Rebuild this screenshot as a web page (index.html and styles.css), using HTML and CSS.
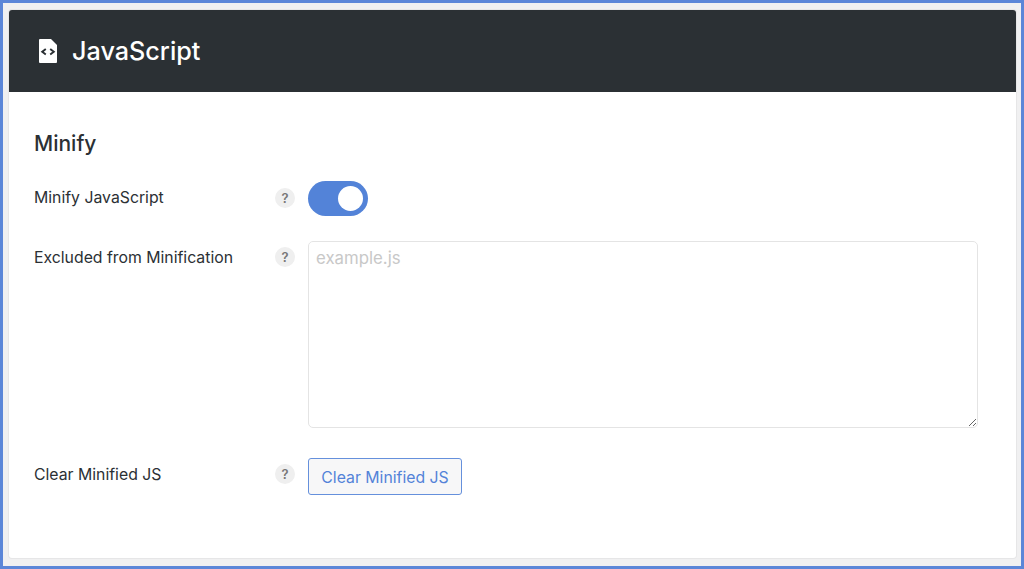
FILE: index.html
```html
<!DOCTYPE html>
<html lang="en">
<head>
    <meta charset="UTF-8">
    <meta name="viewport" content="width=device-width, initial-scale=1.0">
    <title>JavaScript</title>
    <link rel="stylesheet" href="styles.css">
</head>
<body>
    <div class="frame">
        <div class="card">
            <div class="card-header">
                <svg class="file-icon" width="18" height="24" viewBox="0 0 18 24">
                    <path d="M1 0H12L18 6V23a1 1 0 0 1-1 1H1a1 1 0 0 1-1-1V1a1 1 0 0 1 1-1Z" fill="#fff"/>
                    <path d="M6.8 10 3.2 12.8 6.8 15.6M11.2 10 14.8 12.8 11.2 15.6" fill="none" stroke="#2b3034" stroke-width="1.9"/>
                </svg>
                <h1>JavaScript</h1>
            </div>
            <div class="card-body">
                <h2>Minify</h2>
                <div class="row row-toggle">
                    <label>Minify JavaScript</label>
                    <span class="help">?</span>
                    <span class="toggle"><span class="knob"></span></span>
                </div>
                <div class="row row-area">
                    <label>Excluded from Minification</label>
                    <span class="help">?</span>
                    <textarea placeholder="example.js"></textarea>
                </div>
                <div class="row row-button">
                    <label>Clear Minified JS</label>
                    <span class="help">?</span>
                    <button>Clear Minified JS</button>
                </div>
            </div>
        </div>
    </div>
</body>
</html>
```

FILE: styles.css
```css
* {
    box-sizing: border-box;
}

html, body {
    height: 100%;
}

body {
    margin: 0;
    font-family: Inter, "Liberation Sans", sans-serif;
    color: #2b3034;
}

.frame {
    height: 569px;
    padding: 7px 5px 8px 6px;
    background: #f0f0f1;
    border: 3px solid #5b86d8;
}

.card {
    height: 100%;
    background: #fff;
    border-radius: 3px;
    box-shadow: 0 0 0 1px #e6e6e7;
    overflow: hidden;
}

.card-header {
    display: flex;
    align-items: center;
    height: 82px;
    padding: 0 0 0 30px;
    background: #2b3034;
    color: #fff;
}

.file-icon {
    margin-right: 15px;
}

h1 {
    margin: 0;
    font-size: 25.2px;
    font-weight: 500;
}

.card-body {
    padding: 39px 38px 0 25px;
}

h2 {
    margin: 0 0 24px;
    font-size: 21px;
    line-height: 26px;
    font-weight: 500;
}

.row {
    display: flex;
    align-items: flex-start;
}

label {
    width: 241px;
    font-size: 15.8px;
    line-height: 20px;
}

.help {
    display: flex;
    align-items: center;
    justify-content: center;
    width: 20px;
    height: 20px;
    margin-right: 13px;
    border-radius: 50%;
    background: #efefef;
    color: #777;
    font-size: 13px;
    font-weight: 600;
}

.row-toggle {
    height: 60px;
}

.row-toggle label, .row-toggle .help {
    margin-top: 7px;
}

.toggle {
    display: flex;
    justify-content: flex-end;
    align-items: center;
    width: 60px;
    height: 35px;
    padding-right: 5px;
    border-radius: 18px;
    background: #5383d8;
}

.knob {
    width: 25px;
    height: 25px;
    border-radius: 50%;
    background: #fff;
}

.row-area {
    height: 217px;
}

.row-area label {
    margin-top: 7px;
}

.row-area .help {
    margin-top: 6px;
}

textarea {
    flex: 1;
    height: 187px;
    padding: 4px 7px;
    border: 1px solid #e4e4e4;
    border-radius: 5px;
    outline: none;
    font-family: inherit;
    font-size: 16.8px;
    line-height: 24px;
}

textarea::placeholder {
    color: #c8c8c8;
}

.row-button label {
    margin-top: 7px;
}

.row-button .help {
    margin-top: 6px;
}

button {
    height: 37px;
    width: 154px;
    padding: 1px 0 0;
    border: 1px solid #6590dc;
    border-radius: 3px;
    background: #f7f7f8;
    color: #5383d8;
    font-family: inherit;
    font-size: 15.8px;
}
```
